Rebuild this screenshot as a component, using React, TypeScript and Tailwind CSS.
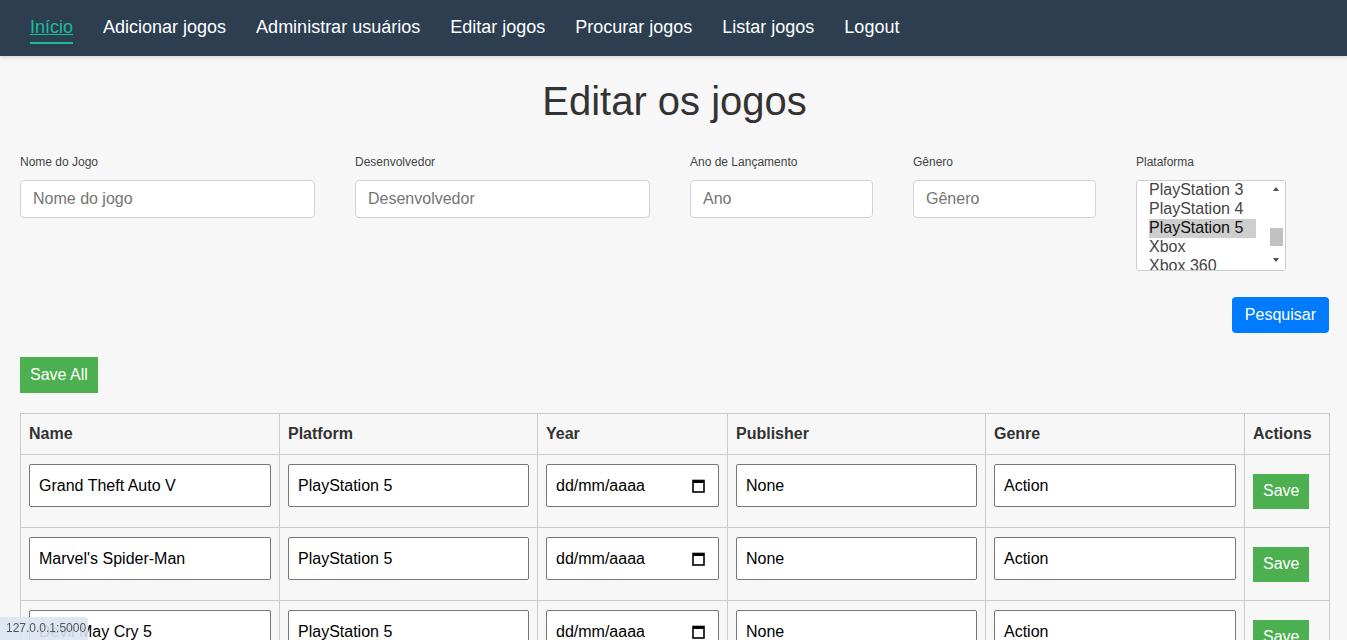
import { useEffect, useRef } from "react";

const navLinks = [
  "Início",
  "Adicionar jogos",
  "Administrar usuários",
  "Editar jogos",
  "Procurar jogos",
  "Listar jogos",
  "Logout",
];

const platforms = [
  "PC",
  "Nintendo Switch",
  "Nintendo 3DS",
  "Wii",
  "Wii U",
  "PlayStation",
  "PlayStation 2",
  "PlayStation Vita",
  "PlayStation 3",
  "PlayStation 4",
  "PlayStation 5",
  "Xbox",
  "Xbox 360",
  "Xbox One",
  "Xbox Series X/S",
];

const games = [
  { name: "Grand Theft Auto V", platform: "PlayStation 5", publisher: "None", genre: "Action" },
  { name: "Marvel's Spider-Man", platform: "PlayStation 5", publisher: "None", genre: "Action" },
  { name: "Devil May Cry 5", platform: "PlayStation 5", publisher: "None", genre: "Action" },
  { name: "God of War", platform: "PlayStation 5", publisher: "None", genre: "Action" },
];

const font = "font-['Liberation_Sans',Arial,sans-serif]";

function CalendarIcon() {
  return (
    <svg width="13" height="14" viewBox="0 0 13 14" fill="none">
      <rect x="1" y="1.5" width="11" height="11.5" stroke="#000" strokeWidth="1.6" />
      <rect x="1" y="1.5" width="11" height="2.5" fill="#000" />
    </svg>
  );
}

function Field({ label, placeholder, width }: { label: string; placeholder: string; width: string }) {
  return (
    <div className={`flex flex-col ${width}`}>
      <label className="text-[12px] leading-[14px] text-[#444] mb-[11px]">{label}</label>
      <input
        placeholder={placeholder}
        className="h-[38px] w-full rounded-[4px] border border-[#ced4da] bg-white px-[12px] text-[16px] text-[#333] placeholder:text-[#757575] outline-none"
      />
    </div>
  );
}

function CellInput({ value }: { value: string }) {
  return (
    <input
      defaultValue={value}
      className="h-[43px] w-full rounded-[2px] border border-[#767676] bg-white pl-[9px] text-[16px] text-black outline-none"
    />
  );
}

export default function App() {
  const selRef = useRef<HTMLSelectElement>(null);

  useEffect(() => {
    const sel = selRef.current;
    if (!sel) return;
    const idx = platforms.indexOf("PlayStation 3");
    const opt = sel.options[idx];
    const first = sel.options[0];
    let top = opt.offsetTop - first.offsetTop;
    if (!top) top = idx * (first.offsetHeight || 19);
    sel.scrollTop = top;
  }, []);

  return (
    <div className={`min-h-screen bg-[#f7f7f7] ${font}`}>
      <nav className="h-[56px] bg-[#2c3e50] flex items-start gap-[30px] pl-[30px] pt-[17px] shadow-[0_2px_4px_rgba(0,0,0,0.12)]">
        {navLinks.map((l, i) => (
          <a
            key={l}
            href="#"
            className={`text-[18px] leading-[21px] pb-[4px] border-b-2 ${
              i === 0 ? "text-[#1abc9c] underline border-[#1abc9c]" : "text-white border-transparent"
            }`}
          >
            {l}
          </a>
        ))}
      </nav>

      <main className="pl-[20px] pr-[18px]">
        <h1 className="mt-[22px] text-center text-[40px] leading-[46px] text-[#333]">Editar os jogos</h1>

        <div className="mt-[31px] flex gap-[40px]">
          <Field label="Nome do Jogo" placeholder="Nome do jogo" width="w-[295px]" />
          <Field label="Desenvolvedor" placeholder="Desenvolvedor" width="w-[295px]" />
          <Field label="Ano de Lançamento" placeholder="Ano" width="w-[183px]" />
          <Field label="Gênero" placeholder="Gênero" width="w-[183px]" />
          <div className="flex flex-col w-[150px]">
            <label className="text-[12px] leading-[14px] text-[#444] mb-[11px]">Plataforma</label>
            <div className="relative">
              <select
                ref={selRef}
                multiple
                defaultValue={["PlayStation 5"]}
                className="block h-[91px] w-full rounded-[3px] border border-[#ccc] bg-white pl-[12px] pr-[29px] py-0 text-[16px] leading-[19px] text-[#444] outline-none [scrollbar-width:none]"
              >
                {platforms.map((p) => (
                  <option key={p} value={p}>
                    {p}
                  </option>
                ))}
              </select>
              {/* scrollbar drawn over the list, since the browser hides its own */}
              <div className="pointer-events-none absolute left-[133px] top-[1px] h-[89px] w-[16px] bg-white">
                <span className="absolute left-[4px] top-[6px] h-0 w-0 border-x-[3.5px] border-b-[4px] border-x-transparent border-b-[#505050]" />
                <span className="absolute left-[1px] top-[47px] h-[18px] w-[13px] bg-[#c1c1c1]" />
                <span className="absolute left-[4px] top-[77px] h-0 w-0 border-x-[3.5px] border-t-[4px] border-x-transparent border-t-[#505050]" />
              </div>
            </div>
          </div>
        </div>

        <div className="mt-[26px] flex justify-end">
          <button className="h-[36px] rounded-[4px] bg-[#007bff] px-[13px] text-[16px] text-white">Pesquisar</button>
        </div>

        <button className="mt-[24px] h-[36px] bg-[#4caf50] px-[10px] text-[16px] text-white">Save All</button>

        <table className="mt-[20px] w-full table-fixed border-collapse">
          <thead>
            <tr>
              {[
                ["Name", "w-[259px]"],
                ["Platform", "w-[258px]"],
                ["Year", "w-[190px]"],
                ["Publisher", "w-[258px]"],
                ["Genre", "w-[259px]"],
                ["Actions", "w-[85px]"],
              ].map(([h, w]) => (
                <th key={h} className={`${w} border border-[#ccc] p-0 text-left`}>
                  <div className="h-[40px] flex items-center px-2 text-[16px] font-bold text-[#333]">{h}</div>
                </th>
              ))}
            </tr>
          </thead>
          <tbody>
            {games.map((g) => (
              <tr key={g.name}>
                <td className="border border-[#ccc] p-0 align-top">
                  <div className="h-[72px] px-2 pt-[9px]">
                    <CellInput value={g.name} />
                  </div>
                </td>
                <td className="border border-[#ccc] p-0 align-top">
                  <div className="h-[72px] px-2 pt-[9px]">
                    <CellInput value={g.platform} />
                  </div>
                </td>
                <td className="border border-[#ccc] p-0 align-top">
                  <div className="h-[72px] px-2 pt-[9px]">
                    <div className="h-[43px] w-full rounded-[2px] border border-[#767676] bg-white pl-[9px] pr-[13px] flex items-center justify-between text-[16px] text-black">
                      <span>dd/mm/aaaa</span>
                      <CalendarIcon />
                    </div>
                  </div>
                </td>
                <td className="border border-[#ccc] p-0 align-top">
                  <div className="h-[72px] px-2 pt-[9px]">
                    <CellInput value={g.publisher} />
                  </div>
                </td>
                <td className="border border-[#ccc] p-0 align-top">
                  <div className="h-[72px] px-2 pt-[9px]">
                    <CellInput value={g.genre} />
                  </div>
                </td>
                <td className="border border-[#ccc] p-0 align-top">
                  <div className="h-[72px] px-2 flex items-center">
                    <button className="h-[35px] bg-[#4caf50] px-[10px] text-[16px] text-white">Save</button>
                  </div>
                </td>
              </tr>
            ))}
          </tbody>
        </table>
      </main>

      <div className="fixed bottom-0 left-0 h-[23px] w-[88px] rounded-tr-[4px] bg-[#dbe4f3]/90 pl-[6px] text-[12px] leading-[23px] text-[#555]">
        127.0.0.1:5000
      </div>
    </div>
  );
}
